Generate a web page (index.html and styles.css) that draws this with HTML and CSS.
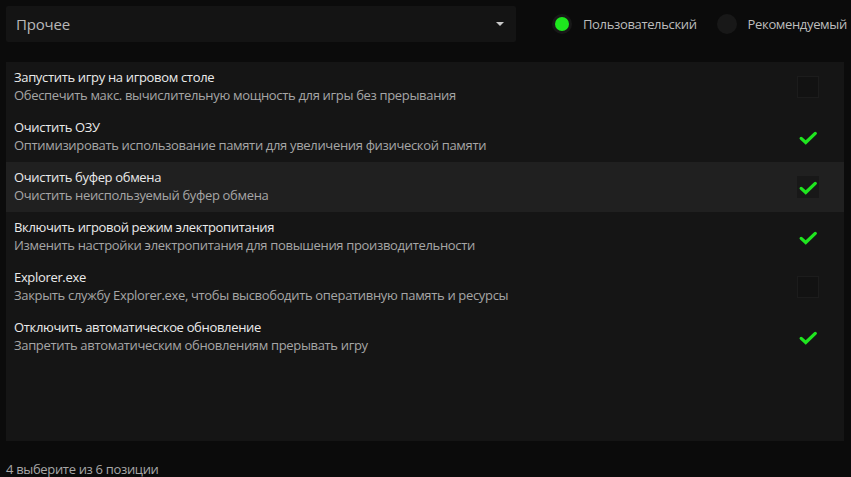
FILE: index.html
```html
<!DOCTYPE html>
<html lang="ru">
<head>
<meta charset="utf-8">
<link rel="stylesheet" href="styles.css">
</head>
<body>
<div class="page">
  <div class="top">
    <div class="select">
      <span class="select-text">Прочее</span>
      <span class="caret"></span>
    </div>
    <div class="modes">
      <div class="radio on"><span class="dot"></span><span class="rlabel">Пользовательский</span></div>
      <div class="radio"><span class="dot"></span><span class="rlabel">Рекомендуемый</span></div>
    </div>
  </div>
  <div class="panel">
    <div class="row">
      <div class="txt"><div class="title">Запустить игру на игровом столе</div><div class="desc">Обеспечить макс. вычислительную мощность для игры без прерывания</div></div>
      <span class="cb"></span>
    </div>
    <div class="row">
      <div class="txt"><div class="title">Очистить ОЗУ</div><div class="desc">Оптимизировать использование памяти для увеличения физической памяти</div></div>
      <span class="cb checked"><svg viewBox="0 0 22 22"><path d="M3.5 12.5 L8.5 17 L19 7" /></svg></span>
    </div>
    <div class="row hover">
      <div class="txt"><div class="title">Очистить буфер обмена</div><div class="desc">Очистить неиспользуемый буфер обмена</div></div>
      <span class="cb checked boxed"><svg viewBox="0 0 22 22"><path d="M3.5 12.5 L8.5 17 L19 7" /></svg></span>
    </div>
    <div class="row">
      <div class="txt"><div class="title">Включить игровой режим электропитания</div><div class="desc">Изменить настройки электропитания для повышения производительности</div></div>
      <span class="cb checked"><svg viewBox="0 0 22 22"><path d="M3.5 12.5 L8.5 17 L19 7" /></svg></span>
    </div>
    <div class="row">
      <div class="txt"><div class="title">Explorer.exe</div><div class="desc">Закрыть службу Explorer.exe, чтобы высвободить оперативную память и ресурсы</div></div>
      <span class="cb"></span>
    </div>
    <div class="row">
      <div class="txt"><div class="title">Отключить автоматическое обновление</div><div class="desc">Запретить автоматическим обновлениям прерывать игру</div></div>
      <span class="cb checked"><svg viewBox="0 0 22 22"><path d="M3.5 12.5 L8.5 17 L19 7" /></svg></span>
    </div>
  </div>
  <div class="footer">4 выберите из 6 позиции</div>
</div>
</body>
</html>
```
FILE: styles.css
```css
html, body {
  margin: 0;
  padding: 0;
  background: #0b0b0b;
  font-family: "Open Sans", "Noto Sans", sans-serif;
  color: #e4e4e4;
}
.page {
  width: 851px;
  height: 477px;
  padding: 6px 7px 0 6px;
  box-sizing: border-box;
  display: flex;
  flex-direction: column;
}
.top {
  display: flex;
  align-items: center;
  height: 36px;
  flex-shrink: 0;
}
.select {
  width: 510px;
  flex-shrink: 0;
  height: 36px;
  box-sizing: border-box;
  background: #141414;
  border-radius: 2px;
  display: flex;
  align-items: center;
  justify-content: space-between;
  padding: 0 10px 0 10px;
}
.select-text {
  font-size: 15px;
  color: #b8b8b8;
  letter-spacing: -0.2px;
}
.caret {
  width: 0;
  height: 0;
  border-left: 4px solid transparent;
  border-right: 4px solid transparent;
  border-top: 4px solid #c8c8c8;
  margin-right: 2px;
}
.modes {
  display: flex;
  align-items: center;
  margin-left: 36px;
  gap: 20px;
  white-space: nowrap;
}
.radio {
  display: flex;
  align-items: center;
  gap: 11px;
}
.dot {
  width: 20px;
  height: 20px;
  border-radius: 50%;
  background: #181818;
  box-sizing: border-box;
  display: flex;
  align-items: center;
  justify-content: center;
  flex-shrink: 0;
}
.radio.on .dot::after {
  content: "";
  width: 14px;
  height: 14px;
  border-radius: 50%;
  background: #1ee81e;
}
.rlabel {
  font-size: 13px;
  color: #bdbdbd;
  letter-spacing: -0.35px;
}
.panel {
  margin-top: 20px;
  height: 379px;
  flex-shrink: 0;
  background: #151515;
  display: flex;
  flex-direction: column;
}
.row {
  height: 50px;
  flex-shrink: 0;
  display: flex;
  align-items: center;
  justify-content: space-between;
  padding: 0 25px 0 8px;
}
.row.hover {
  background: #202020;
}
.txt {
  display: flex;
  flex-direction: column;
  gap: 1px;
  margin-top: -2px;
}
.title {
  font-size: 13px;
  color: #ebebeb;
  line-height: 17px;
  letter-spacing: -0.33px;
}
.desc {
  font-size: 13px;
  color: #a6a6a6;
  line-height: 17px;
  letter-spacing: -0.33px;
}
.cb {
  width: 22px;
  height: 22px;
  box-sizing: border-box;
  border: 1px solid #1c1c1c;
  background: #121212;
  display: flex;
  align-items: center;
  justify-content: center;
}
.cb.checked {
  border-color: transparent;
  background: transparent;
}
.cb.checked.boxed {
  background: #181818;
}
.cb svg {
  width: 22px;
  height: 22px;
}
.cb svg path {
  fill: none;
  stroke: #1fe51f;
  stroke-width: 3.6;
  stroke-linecap: round;
  stroke-linejoin: miter;
}
.footer {
  margin-top: 19px;
  font-size: 13px;
  color: #a8a8a8;
  letter-spacing: -0.33px;
}
```
